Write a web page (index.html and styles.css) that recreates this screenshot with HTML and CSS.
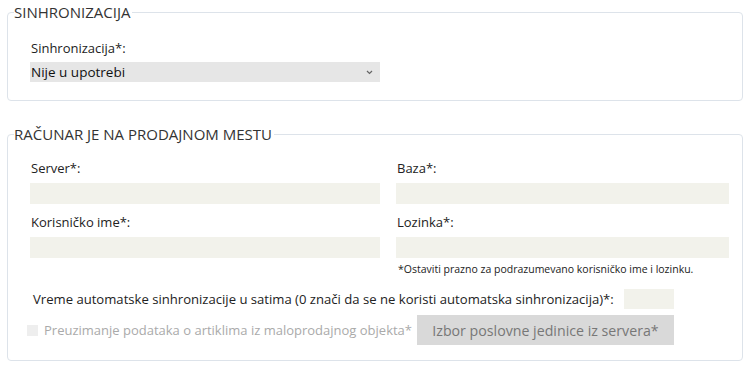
FILE: index.html
```html
<!DOCTYPE html>
<html lang="sr">
<head>
<meta charset="utf-8">
<link rel="stylesheet" href="styles.css">
</head>
<body>
<div class="page">
  <fieldset class="box box-sync">
    <legend>SINHRONIZACIJA</legend>
    <div class="inner">
      <div class="field col-left">
        <label class="lbl lbl-sync">Sinhronizacija*:</label>
        <div class="select">
          <span>Nije u upotrebi</span>
          <svg class="chev" width="7" height="5" viewBox="0 0 7 5"><path d="M1 1 L3.5 3.5 L6 1" fill="none" stroke="#666" stroke-width="1.2"/></svg>
        </div>
      </div>
    </div>
  </fieldset>

  <fieldset class="box box-pos">
    <legend>RAČUNAR JE NA PRODAJNOM MESTU</legend>
    <div class="inner">
      <div class="grid">
        <div class="field">
          <label class="lbl">Server*:</label>
          <div class="input"></div>
        </div>
        <div class="field">
          <label class="lbl">Baza*:</label>
          <div class="input"></div>
        </div>
        <div class="field">
          <label class="lbl lbl-2">Korisničko ime*:</label>
          <div class="input"></div>
        </div>
        <div class="field">
          <label class="lbl lbl-2">Lozinka*:</label>
          <div class="input"></div>
          <div class="note">*Ostaviti prazno za podrazumevano korisničko ime i lozinku.</div>
        </div>
      </div>
      <div class="row-time">
        <span class="time-lbl">Vreme automatske sinhronizacije u satima (0 znači da se ne koristi automatska sinhronizacija)*:</span>
        <div class="input input-small"></div>
      </div>
      <div class="row-check">
        <span class="check"></span>
        <span class="check-lbl">Preuzimanje podataka o artiklima iz maloprodajnog objekta*</span>
        <button class="btn" type="button">Izbor poslovne jedinice iz servera*</button>
      </div>
    </div>
  </fieldset>
</div>
</body>
</html>
```

FILE: styles.css
```css
* { box-sizing: border-box; }
html, body { margin: 0; padding: 0; background: #fff; }
body {
  font-family: "Open Sans", "Noto Sans", sans-serif;
  font-size: 13px;
  color: #222;
}
.page { padding: 3px 7px 0 7px; width: 750px; }

.box {
  margin: 0;
  padding: 0;
  border: 1px solid #dde3ea;
  border-radius: 4px;
  min-width: 0;
}
.box legend {
  margin-left: 6px;
  padding: 0 2px 0 0;
  font-size: 15px;
  line-height: 18px;
  color: #333;
}
.box-pos { margin-top: 24px; }

.inner { padding: 0 0 0 22px; }
.box-sync .inner { padding-top: 17px; padding-bottom: 18px; }
.box-pos .inner { padding-top: 15px; padding-bottom: 15px; }

.col-left { width: 350px; }
.lbl {
  display: block;
  line-height: 20px;
  padding-left: 1px;
  margin-bottom: 5px;
}
.lbl-sync { margin-bottom: 4px; }
.lbl-2 { margin-top: 8px; }

.select {
  height: 20px;
  background: #e6e6e6;
  display: flex;
  align-items: center;
  justify-content: space-between;
  padding: 0 7px 0 1px;
  color: #111;
  font-size: 13.5px;
}
.chev { display: block; }

.grid {
  display: grid;
  grid-template-columns: 350px 333px;
  column-gap: 16px;
}
.input {
  height: 21px;
  background: #f2f2eb;
}
.note {
  font-size: 10.5px;
  line-height: 14px;
  margin-top: 4px;
  padding-left: 2px;
  color: #222;
}

.row-time {
  display: flex;
  align-items: center;
  margin-top: 13px;
  padding-left: 3px;
}
.time-lbl { line-height: 20px; font-size: 13.1px; }
.input-small { width: 50px; height: 20px; margin-left: 10px; }

.row-check {
  display: flex;
  align-items: center;
  margin-top: 6px;
  margin-left: -3px;
}
.check {
  width: 11px;
  height: 11px;
  background: #eee;
  margin-right: 6px;
}
.check-lbl { color: #aaa; line-height: 20px; }
.btn {
  margin-left: 5px;
  width: 257px;
  height: 30px;
  border: 0;
  background: #d9d9d9;
  color: #777;
  font-family: "Open Sans", "Noto Sans", sans-serif;
  font-size: 14.2px;
  padding: 0;
}
```
